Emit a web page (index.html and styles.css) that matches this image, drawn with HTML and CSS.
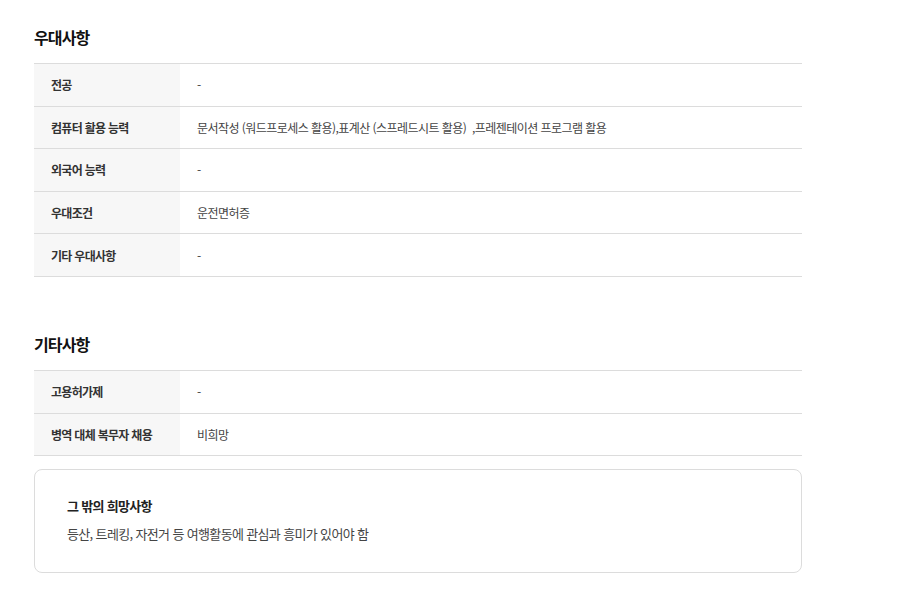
FILE: index.html
```html
<!DOCTYPE html>
<html lang="ko">
<head>
<meta charset="utf-8">
<link rel="stylesheet" href="styles.css">
</head>
<body>
<div class="page">
  <section class="section">
    <h2 class="title">우대사항</h2>
    <div class="table">
      <div class="row"><div class="label">전공</div><div class="value">-</div></div>
      <div class="row"><div class="label">컴퓨터 활용 능력</div><div class="value">문서작성 (워드프로세스 활용),표계산 (스프레드시트 활용)&nbsp;&nbsp;,프레젠테이션 프로그램 활용</div></div>
      <div class="row"><div class="label">외국어 능력</div><div class="value">-</div></div>
      <div class="row"><div class="label">우대조건</div><div class="value">운전면허증</div></div>
      <div class="row"><div class="label">기타 우대사항</div><div class="value">-</div></div>
    </div>
  </section>
  <section class="section second">
    <h2 class="title">기타사항</h2>
    <div class="table">
      <div class="row"><div class="label">고용허가제</div><div class="value">-</div></div>
      <div class="row"><div class="label">병역 대체 복무자 채용</div><div class="value">비희망</div></div>
    </div>
    <div class="box">
      <div class="box-title">그 밖의 희망사항</div>
      <div class="box-text">등산, 트레킹, 자전거 등 여행활동에 관심과 흥미가 있어야 함</div>
    </div>
  </section>
</div>
</body>
</html>
```
FILE: styles.css
```css
* { box-sizing: border-box; }
body {
  margin: 0;
  background: #fff;
  font-family: "Noto Sans CJK KR", "Noto Sans", sans-serif;
  color: #333;
}
.page {
  width: 768px;
  margin-left: 34px;
  padding-top: 26px;
}
.section.second { margin-top: 56px; }
.title {
  margin: 0 0 15px;
  font-size: 16px;
  line-height: 22px;
  font-weight: 700;
  color: #111;
  letter-spacing: -0.9px;
}
.table {
  border-top: 1px solid #dcdcdc;
}
.row {
  display: flex;
  border-bottom: 1px solid #dcdcdc;
  height: 42.6px;
}
.label {
  width: 146px;
  flex: none;
  background: #f7f7f7;
  padding-left: 17px;
  display: flex;
  align-items: center;
  font-size: 12px;
  font-weight: 700;
  color: #333;
  letter-spacing: -0.7px;
}
.value {
  flex: 1;
  padding-left: 17px;
  display: flex;
  align-items: center;
  font-size: 12px;
  color: #444;
  letter-spacing: -0.55px;
  white-space: pre;
}
.box {
  margin-top: 13px;
  border: 1px solid #dcdcdc;
  border-radius: 8px;
  padding: 27px 32px 28px;
}
.box-title {
  font-size: 13px;
  line-height: 18px;
  font-weight: 700;
  color: #222;
  letter-spacing: -0.7px;
}
.box-text {
  margin-top: 9px;
  font-size: 13px;
  line-height: 20px;
  color: #444;
  letter-spacing: -0.65px;
}
```
